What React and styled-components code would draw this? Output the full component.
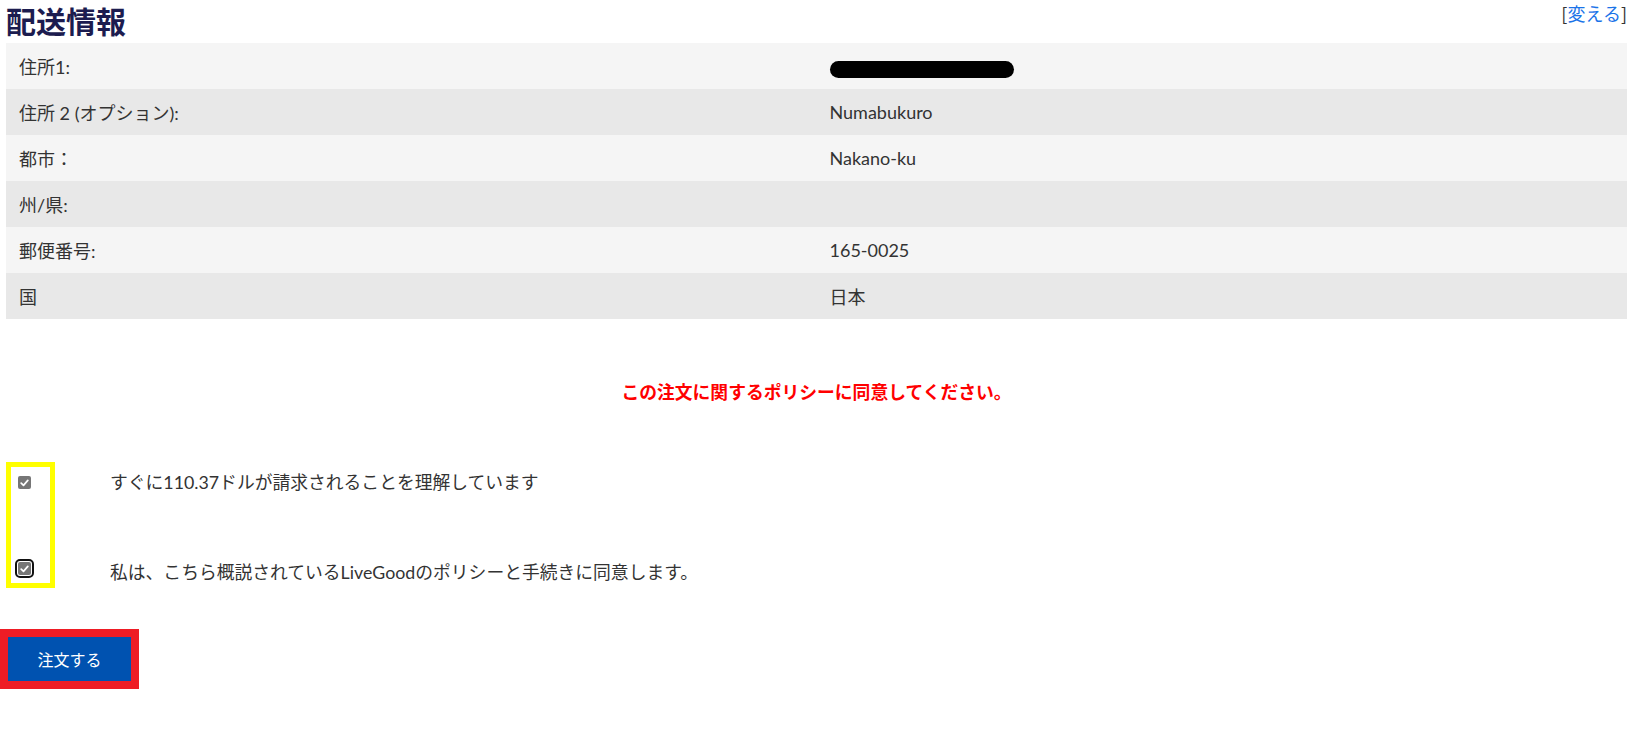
import React from "react";
import styled, { createGlobalStyle } from "styled-components";

const Global = createGlobalStyle`
  html, body { margin: 0; padding: 0; background: #ffffff; }
  body {
    font-family: Lato, "Noto Sans CJK JP", sans-serif;
    color: #333333;
  }
`;

const Page = styled.div`
  width: 1637px;
  min-height: 731px;
`;

const Section = styled.div`
  padding: 0 10px 0 6px;
`;

const Header = styled.div`
  display: flex;
  justify-content: space-between;
  align-items: flex-start;
  height: 43px;
`;

const Title = styled.h2`
  margin: 0;
  padding-top: 1px;
  font-family: "Noto Sans CJK JP", sans-serif;
  font-size: 30px;
  line-height: 38px;
  font-weight: 700;
  color: #1c1c4f;
`;

const ChangeLink = styled.span`
  font-family: "Noto Sans CJK JP", sans-serif;
  font-size: 18px;
  line-height: 26px;
  color: #333;
  a {
    color: #1a73e8;
    text-decoration: none;
  }
`;

const Table = styled.div`
  display: flex;
  flex-direction: column;
`;

const Row = styled.div`
  display: grid;
  grid-template-columns: 1fr 1fr;
  height: 46px;
  align-items: center;
  background: ${(p) => (p.$alt ? "#e8e8e8" : "#f5f5f5")};
`;

const Cell = styled.div`
  padding: 0 12px 0 13px;
  font-size: 18px;
  color: #333;
`;

const Redacted = styled.span`
  display: inline-block;
  width: 184px;
  height: 17px;
  margin-top: 5px;
  border-radius: 9px;
  background: #000;
  vertical-align: middle;
`;

const Notice = styled.p`
  margin: 59px 0 0;
  text-align: center;
  font-family: "Noto Sans CJK JP", sans-serif;
  font-size: 17.8px;
  line-height: 26px;
  font-weight: 700;
  color: #ff0000;
`;

const Agreements = styled.div`
  display: flex;
  gap: 55px;
  margin-top: 58px;
`;

const CheckColumn = styled.div`
  box-sizing: border-box;
  width: 49px;
  height: 126px;
  border: 5px solid #ffff00;
  display: flex;
  flex-direction: column;
  padding: 9px 0 0 7px;
  gap: 73px;
`;

const Check = styled.span`
  box-sizing: border-box;
  width: 13px;
  height: 13px;
  border-radius: 2px;
  background: #767676;
  display: flex;
  align-items: center;
  justify-content: center;
  outline: ${(p) => (p.$focused ? "2px solid #111" : "none")};
  outline-offset: 1px;
`;

const TextColumn = styled.div`
  display: flex;
  flex-direction: column;
  gap: 70px;
  padding-top: 10px;
`;

const AgreeText = styled.div`
  font-size: 17.8px;
  line-height: 20px;
  color: #333;
`;

const ButtonFrame = styled.div`
  margin-top: 41px;
  display: inline-block;
  border: 8px solid #ee1c25;
`;

const OrderButton = styled.button`
  display: block;
  width: 123px;
  height: 44px;
  border: none;
  background: #0052b0;
  color: #fff;
  font-family: "Noto Sans CJK JP", sans-serif;
  font-size: 16px;
  cursor: pointer;
`;

const Tick = () => (
  <svg width="9" height="8" viewBox="0 0 9 8">
    <path d="M1.2 4.2 L3.5 6.4 L7.8 1.4" fill="none" stroke="#fff" strokeWidth="1.7" strokeLinecap="round" strokeLinejoin="round" />
  </svg>
);

const rows = [
  ["住所1:", <Redacted key="r" />],
  ["住所 2 (オプション):", "Numabukuro"],
  ["都市：", "Nakano-ku"],
  ["州/県:", ""],
  ["郵便番号:", "165-0025"],
  ["国", "日本"],
];

export default function App() {
  return (
    <Page>
      <Global />
      <Section>
        <Header>
          <Title>配送情報</Title>
          <ChangeLink>
            [<a href="#">変える</a>]
          </ChangeLink>
        </Header>
        <Table>
          {rows.map(([label, value], i) => (
            <Row key={i} $alt={i % 2 === 1}>
              <Cell>{label}</Cell>
              <Cell>{value}</Cell>
            </Row>
          ))}
        </Table>
        <Notice>この注文に関するポリシーに同意してください。</Notice>
        <Agreements>
          <CheckColumn>
            <Check><Tick /></Check>
            <Check $focused><Tick /></Check>
          </CheckColumn>
          <TextColumn>
            <AgreeText>すぐに110.37ドルが請求されることを理解しています</AgreeText>
            <AgreeText>私は、こちら概説されているLiveGoodのポリシーと手続きに同意します。</AgreeText>
          </TextColumn>
        </Agreements>
      </Section>
      <ButtonFrame>
        <OrderButton>注文する</OrderButton>
      </ButtonFrame>
    </Page>
  );
}
